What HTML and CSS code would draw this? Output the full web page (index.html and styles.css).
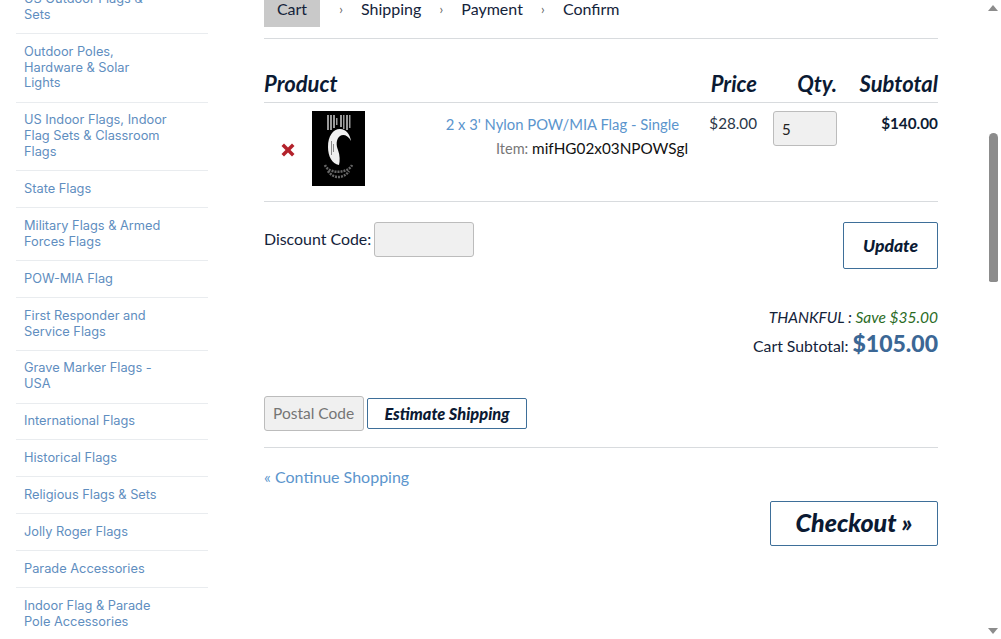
FILE: index.html
```html
<!DOCTYPE html>
<html lang="en">
<head>
<meta charset="utf-8">
<title>Cart</title>
<link rel="stylesheet" href="styles.css">
</head>
<body>
<div class="page">
  <nav class="sidebar">
    <a class="cat" href="#">US Outdoor Flags &amp; Sets</a>
    <a class="cat" href="#">Outdoor Poles,<br>Hardware &amp; Solar<br>Lights</a>
    <a class="cat" href="#">US Indoor Flags, Indoor<br>Flag Sets &amp; Classroom<br>Flags</a>
    <a class="cat" href="#">State Flags</a>
    <a class="cat" href="#">Military Flags &amp; Armed Forces Flags</a>
    <a class="cat" href="#">POW-MIA Flag</a>
    <a class="cat" href="#">First Responder and Service Flags</a>
    <a class="cat" href="#">Grave Marker Flags - USA</a>
    <a class="cat" href="#">International Flags</a>
    <a class="cat" href="#">Historical Flags</a>
    <a class="cat" href="#">Religious Flags &amp; Sets</a>
    <a class="cat" href="#">Jolly Roger Flags</a>
    <a class="cat" href="#">Parade Accessories</a>
    <a class="cat" href="#">Indoor Flag &amp; Parade Pole Accessories</a>
  </nav>
  <main class="cart">
    <div class="steps">
      <span class="step active">Cart</span>
      <span class="sep">›</span>
      <span class="step">Shipping</span>
      <span class="sep">›</span>
      <span class="step">Payment</span>
      <span class="sep">›</span>
      <span class="step">Confirm</span>
    </div>
    <div class="cols head">
      <div class="h-product">Product</div>
      <div class="h-price">Price</div>
      <div class="h-qty">Qty.</div>
      <div class="h-sub">Subtotal</div>
    </div>
    <div class="cols row">
      <div class="remove">
        <svg class="x" width="14" height="14" viewBox="0 0 14 14"><path d="M3 0.5 7 4.5 11 0.5 13.5 3 9.5 7 13.5 11 11 13.5 7 9.5 3 13.5 0.5 11 4.5 7 0.5 3Z" fill="#b3212b"/></svg>
      </div>
      <svg class="flag" width="53" height="75" viewBox="0 0 53 75">
        <rect width="53" height="75" fill="#000"/>
        <path d="M15 4h2v15h-2zM18 4h2v15h-2zM21 4h2v13h-2zM24 7h1.500v7h-1.500zM28 4h2v12h-2zM31 4h1.500v14h-1.500zM34 4h2v15h-2zM37 4h1.500v13h-1.500z" fill="#9a9a9a"/>
        <path d="M16 36C16 25 21 18 28 18C34 18 38 23 39 30C36 24 31 23 28 25C24 28 24 34 26 39C28 44 28 50 27 54C20 53 16 45 16 36Z" fill="#f0f0f0"/>
        <path d="M19.500 30v14M21.500 33v8" stroke="#8a8a8a" stroke-width="1" fill="none"/>
        <path d="M13 54C16 63 36 63 40 54M16 60C21 68 32 68 37 60" stroke="#666" stroke-width="2.500" stroke-dasharray="2 1" fill="none"/>
      </svg>
      <div class="item">
        <a class="item-name" href="#">2 x 3' Nylon POW/MIA Flag - Single</a>
        <div class="item-code"><span class="item-label">Item:</span> mifHG02x03NPOWSgl</div>
      </div>
      <div class="price">$28.00</div>
      <div class="qty"><input class="field qty-input" type="text" value="5"></div>
      <div class="sub">$140.00</div>
    </div>
    <div class="discount">
      <label class="discount-label"><span class="discount-text">Discount Code:</span> <input class="field code-input" type="text"></label>
      <button class="btn update" type="button">Update</button>
    </div>
    <div class="totals">
      <div class="promo"><i>THANKFUL : </i><i class="save">Save $35.00</i></div>
      <div class="total">Cart Subtotal: <b class="amount">$105.00</b></div>
    </div>
    <div class="estimate">
      <input class="field postal" type="text" placeholder="Postal Code">
      <button class="btn est-btn" type="button">Estimate Shipping</button>
    </div>
    <a class="continue" href="#">« Continue Shopping</a>
    <div class="checkout-row"><button class="btn checkout" type="button">Checkout »</button></div>
  </main>
</div>
<div class="scrollbar">
  <span class="arrow up"></span>
  <span class="thumb"></span>
  <span class="arrow down"></span>
</div>
</body>
</html>
```
FILE: styles.css
```css
* { box-sizing: border-box; }
html, body { margin: 0; height: 100%; overflow: hidden; background: #fff; }
body { font-family: Lato, "Open Sans", sans-serif; color: #0d1c33; }
a { text-decoration: none; }
.page { display: flex; align-items: flex-start; margin-top: -6px; padding-left: 16px; }

.sidebar { width: 192px; flex: none; display: flex; flex-direction: column; margin-top: -3.200px; }
.cat { display: block; padding: 0 40px 10.400px 8px; margin-bottom: 9.600px; border-bottom: 1px solid #e9ecef; font: 12.800px/15.900px Inter, Lato, sans-serif; color: #5f8ec0; }

.cart { width: 674px; flex: none; margin-left: 56px; font-size: 15px; }
.steps { display: flex; align-items: flex-start; height: 45px; border-bottom: 1px solid #d8dbde; font-size: 16px; color: #14233a; }
.step { display: block; line-height: 30px; }
.step.active { width: 56px; height: 33px; margin-right: 1px; background: #c9c9c9; text-align: center; }
.sep { width: 40px; line-height: 30px; text-align: center; color: #666; font-size: 13px; }

.cols { display: grid; grid-template-columns: 48px 53px 323px 69px 80px 101px; }
.head { margin-top: 33px; height: 31px; border-bottom: 1px solid #d8dbde; font-weight: 700; font-style: italic; font-size: 22px; line-height: 24px; color: #0b1a33; }
.h-product { grid-column: 1 / 4; }
.h-price { text-align: right; }
.h-qty { text-align: right; }
.h-sub { text-align: right; }

.row { height: 99px; border-bottom: 1px solid #d8dbde; padding-top: 8px; align-items: start; }
.remove { padding: 32px 0 0 17px; }
.x { display: block; }
.flag { display: block; }
.item { text-align: right; padding: 4px 0 0; }
.item-name { display: block; font-size: 14.800px; line-height: 18px; color: #5b95cd; padding-right: 9px; }
.item-code { margin-top: 5px; font-size: 15.300px; line-height: 20px; color: #111; }
.item-label { font-size: 14.500px; color: #777; }
.price { text-align: right; padding-top: 3px; font-size: 15.200px; line-height: 18px; color: #2a3648; }
.qty { text-align: right; }
.sub { text-align: right; padding-top: 3px; font-size: 15.300px; line-height: 18px; font-weight: 700; color: #0d1c33; }

.field { display: block; background: #f0f0f0; border: 1px solid #bcbcbc; border-radius: 3px; font-family: inherit; font-size: 15px; color: #222; outline: none; }
.qty-input { width: 64px; height: 35px; padding: 1px 8px 0; margin-left: auto; }
.btn { background: #fff; border: 1px solid #3e6f99; border-radius: 2px; font-family: Lato, sans-serif; font-weight: 900; font-style: italic; color: #0b1a33; padding: 0; }

.discount { display: flex; justify-content: space-between; align-items: flex-start; padding-top: 20px; }
.discount-label { display: flex; align-items: center; gap: 3px; font-size: 15.900px; color: #14233a; }
.discount-text { margin-bottom: 2px; }
.code-input { width: 100px; height: 35px; }
.update { width: 95px; height: 47px; font-size: 17.500px; }

.totals { margin-top: 38px; text-align: right; }
.promo { font-size: 15.500px; line-height: 20px; color: #14233a; }
.save { color: #2b6b1f; }
.total { margin-top: 1px; font-size: 15.800px; line-height: 30px; color: #14233a; }
.amount { font-size: 23px; color: #3b6795; font-weight: 900; }

.estimate { display: flex; align-items: center; gap: 3px; margin-top: 35px; padding-bottom: 16px; border-bottom: 1px solid #d8dbde; }
.postal { width: 100px; height: 35px; padding: 0 8px 2px; font-size: 15.500px; }
.postal::placeholder { color: #757575; opacity: 1; }
.est-btn { width: 160px; height: 31px; font-size: 16.400px; }

.continue { display: block; margin-top: 19px; font-size: 16px; line-height: 20px; color: #5b95cd; }
.checkout-row { display: flex; justify-content: flex-end; margin-top: 14px; }
.checkout { width: 168px; height: 45px; padding-bottom: 3px; font-size: 25px; }

.scrollbar { position: absolute; top: 0; right: 0; width: 17px; height: 639px; background: #fff; }
.thumb { position: absolute; left: 5px; top: 133px; width: 9px; height: 149px; border-radius: 5px 5px 2px 2px; background: #8c8c8c; }
.arrow { position: absolute; left: 4px; width: 0; height: 0; border-left: 5px solid transparent; border-right: 5px solid transparent; }
.up { top: 5px; border-bottom: 6px solid #8c8c8c; }
.down { top: 628px; border-top: 6px solid #8c8c8c; }
```
